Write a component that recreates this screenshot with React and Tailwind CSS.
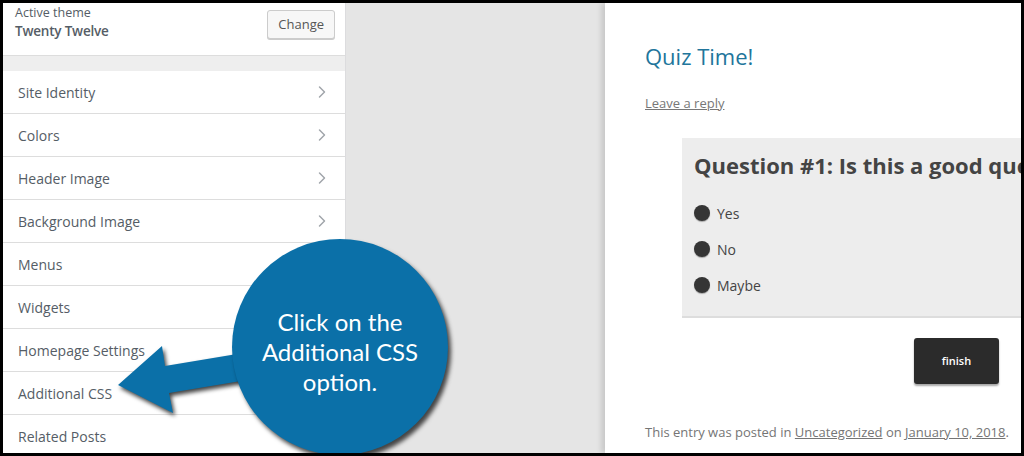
import { ChevronRight } from 'lucide-react'

const sections = [
  'Site Identity',
  'Colors',
  'Header Image',
  'Background Image',
  'Menus',
  'Widgets',
  'Homepage Settings',
  'Additional CSS',
  'Related Posts',
]

const answers = ['Yes', 'No', 'Maybe']

const Sidebar = () => (
  <div className="w-[343px] h-full bg-white border-r border-[#dcdcde] flex flex-col font-['Open_Sans',sans-serif] overflow-hidden">
    {/* Theme header */}
    <div className="h-[53px] flex-shrink-0 flex items-start justify-between pl-[12px] pr-[10px] pt-[1px] border-b border-[#dddddd]">
      <div className="flex flex-col leading-[18px]">
        <span className="text-[12.5px] text-[#555d66]">Active theme</span>
        <span className="text-[13.5px] font-semibold text-[#555d66] tracking-[-0.2px]">Twenty Twelve</span>
      </div>
      <button className="mt-[6px] h-[29px] px-[10px] text-[13px] text-[#555] bg-[#f7f7f7] border border-[#cccccc] rounded-[3px] shadow-[0_1px_0_#cccccc]">
        Change
      </button>
    </div>
    <div className="h-[15px] flex-shrink-0 bg-[#eeeeee]" />

    {/* Panel list */}
    {sections.map((label) => (
      <div
        key={label}
        className="h-[43px] flex-shrink-0 flex items-center justify-between pl-[15px] pr-[13px] border-b border-[#dddddd]"
      >
        <span className="text-[14px] text-[#555d66]">{label}</span>
        <ChevronRight size={20} strokeWidth={1.75} className="text-[#a0a5aa]" />
      </div>
    ))}
  </div>
)

const Preview = () => (
  <div className="w-[416px] h-full bg-white shadow-[-4px_0_5px_rgba(0,0,0,0.12)] overflow-hidden font-['Open_Sans',sans-serif]">
    <div className="pl-[40px] pt-[38px]">
      <h1 className="text-[22px] leading-[30px] text-[#21759b]">Quiz Time!</h1>
      <a className="block mt-[22px] text-[13px] leading-[20px] text-[#777777] underline">Leave a reply</a>
    </div>

    {/* Quiz box */}
    <div className="ml-[77px] mt-[25px] w-[420px] bg-[#ededed] border-b-2 border-[#dddddd] pl-[12px] pt-[12px] pb-[20px]">
      <h2 className="text-[22px] leading-[30px] font-bold text-[#444444] whitespace-nowrap">
        Question #1: Is this a good question?
      </h2>
      <div className="mt-[22px] flex flex-col gap-[14px]">
        {answers.map((a) => (
          <div key={a} className="h-[22px] flex items-center gap-[7px]">
            <span className="w-[16px] h-[16px] rounded-full bg-[#353535] shadow-[0_1px_1px_rgba(0,0,0,0.3)]" />
            <span className="text-[14px] text-[#444444]">{a}</span>
          </div>
        ))}
      </div>
    </div>

    <div className="flex justify-end pr-[22px] mt-[20px]">
      <button className="w-[85px] h-[46px] bg-[#2b2b2b] rounded-[3px] text-white text-[11px] font-semibold shadow-[0_2px_2px_rgba(0,0,0,0.35)]">
        finish
      </button>
    </div>

    <p className="pl-[40px] mt-[38px] text-[13px] leading-[20px] text-[#757575] whitespace-nowrap">
      This entry was posted in <a className="underline">Uncategorized</a> on{' '}
      <a className="underline">January 10, 2018</a>.
    </p>
  </div>
)

const Callout = () => (
  <>
    <svg
      className="absolute left-0 top-0 drop-shadow-[2px_3px_2px_rgba(0,0,0,0.75)]"
      width="300"
      height="456"
      viewBox="0 0 300 456"
    >
      <polygon
        points="115,382 159,343 162,363 240,350 244,377 166,390 170,410"
        fill="#0b70a8"
      />
    </svg>
    <div className="absolute left-[229px] top-[236px] w-[216px] h-[216px] rounded-full bg-[#0b70a8] shadow-[3px_4px_4px_rgba(0,0,0,0.7)] flex items-center justify-center pt-[10px]">
      <p className="text-white text-center text-[24px] leading-[30px] font-['Lato',sans-serif]">
        Click on the
        <br />
        Additional CSS
        <br />
        option.
      </p>
    </div>
  </>
)

export default function App() {
  return (
    <div className="w-[1024px] h-[456px] bg-black pl-[3px] pt-[3px] pr-[3px] pb-[3px]">
      <div className="relative w-full h-full flex overflow-hidden">
        <Sidebar />
        <div className="flex-1 h-full bg-[#e5e5e5]" />
        <Preview />
        <Callout />
      </div>
    </div>
  )
}
